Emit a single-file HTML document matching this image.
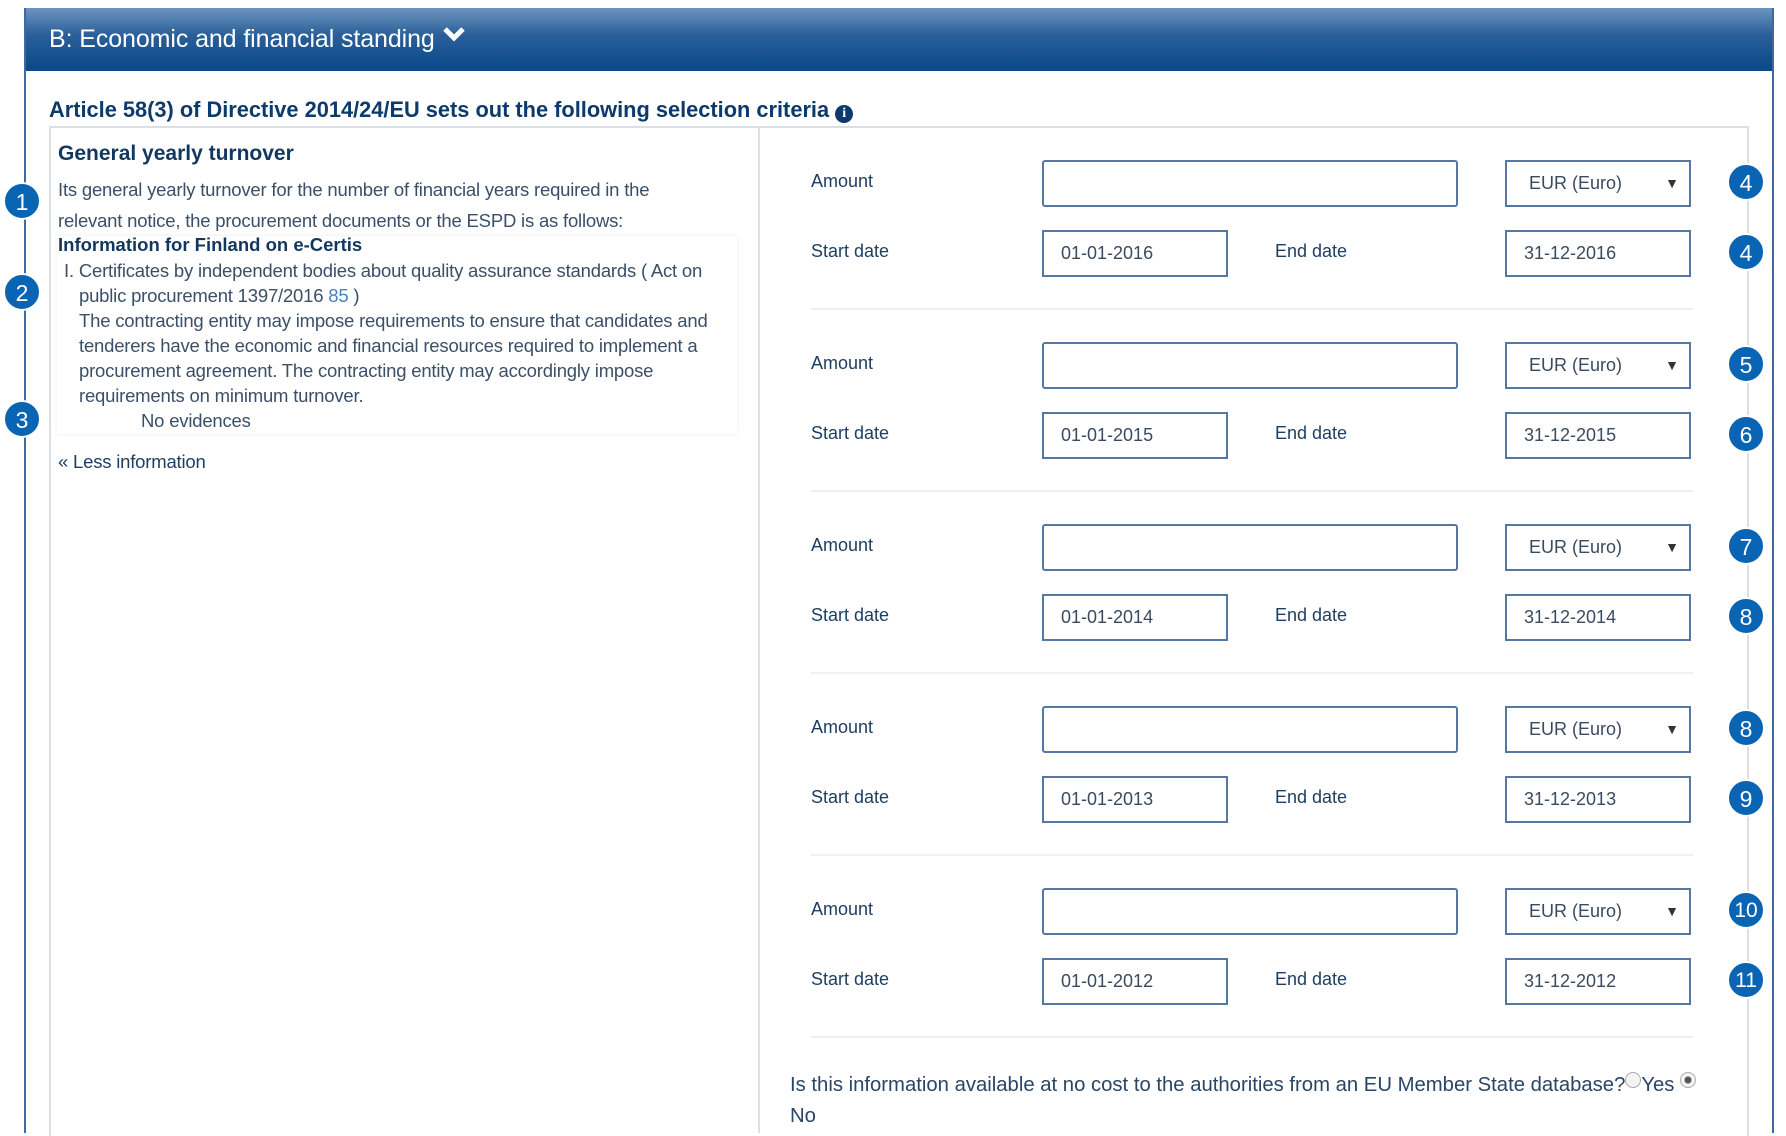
<!DOCTYPE html>
<html><head><meta charset="utf-8"><style>
*{box-sizing:border-box;margin:0;padding:0}
body{width:1786px;height:1133px;background:#fff;position:relative;overflow:hidden;font-family:"Liberation Sans",Arial,sans-serif;color:#2a3f5a}
.a{position:absolute}
.hdr{left:25px;top:8px;width:1749px;height:63px;background:linear-gradient(#6d94bd,#2a5f99 45%,#0b4a8a);border-bottom:3px solid #0a4a8c}
.hdr span{position:absolute;left:24px;top:17px;color:#fff;font-size:25px;letter-spacing:-0.1px}
.vl{width:2px;background:#3d6aa3}
.badge{width:38px;height:38px;border-radius:50%;background:#0a64b4;color:#fff;font-size:23px;text-align:center;line-height:36px;border:2px solid #fff}
.lbl{font-size:18px;color:#1e3f63}
.in{border:2px solid #5577a3;background:#fff;font-size:18px;color:#3a4a5f;padding-left:17px;line-height:42px}
.sep{height:2px;background:#eef0f2;left:811px;width:882px}
.txt{font-size:18.5px;color:#3b4f68;line-height:25px;letter-spacing:-0.2px}
</style></head><body>
<div class="a hdr"><span>B: Economic and financial standing <svg width="24" height="18" viewBox="0 0 24 18" style="vertical-align:4px"><path d="M3 4 L12 13 L21 4" fill="none" stroke="#fff" stroke-width="5"/></svg></span></div>
<div class="a vl" style="left:24px;top:8px;height:1125px"></div>
<div class="a" style="left:1772px;top:8px;width:2px;height:1125px;background:#3d6aa3"></div>
<div class="a" style="left:49px;top:97px;font-size:21.8px;font-weight:bold;color:#0d3a6c">Article 58(3) of Directive 2014/24/EU sets out the following selection criteria <span style="display:inline-block;width:18px;height:18px;border-radius:50%;background:#0d3a6c;color:#fff;font-size:14px;text-align:center;line-height:18px;font-family:'Liberation Serif',serif">i</span></div>
<div class="a" style="left:49px;top:126px;width:1700px;height:1010px;border:2px solid #dcdfe3;border-bottom:none"></div>
<div class="a" style="left:758px;top:128px;width:2px;height:1005px;background:#dcdfe3"></div>
<div class="a" style="left:58px;top:142px;font-size:21px;font-weight:bold;color:#12375f">General yearly turnover</div>
<div class="a txt" style="left:58px;top:174px;line-height:31px;width:640px">Its general yearly turnover for the number of financial years required in the relevant notice, the procurement documents or the ESPD is as follows:</div>
<div class="a" style="left:57px;top:236px;width:680px;height:198px;box-shadow:0 0 4px rgba(0,0,0,.08)"></div>
<div class="a" style="left:58px;top:234px;font-size:18.5px;font-weight:bold;color:#12375f">Information for Finland on e-Certis</div>
<div class="a txt" style="left:64px;top:258px;width:700px">I. Certificates by independent bodies about quality assurance standards ( Act on</div>
<div class="a txt" style="left:79px;top:283px;width:665px">public procurement 1397/2016 <span style="color:#4a7fc0">85</span> )<br>The contracting entity may impose requirements to ensure that candidates and tenderers have the economic and financial resources required to implement a procurement agreement. The contracting entity may accordingly impose requirements on minimum turnover.<br><span style="padding-left:62px">No evidences</span></div>
<div class="a txt" style="left:58px;top:449px;color:#1e3f63">« Less information</div>
<div class="a badge" style="left:3px;top:182px">1</div>
<div class="a badge" style="left:3px;top:273px">2</div>
<div class="a badge" style="left:3px;top:400px">3</div>

<div id="rows"></div>
<script>
var ys=[160,342,524,706,888],b=[["4","4"],["5","6"],["7","8"],["8","9"],["10","11"]],yr=[2016,2015,2014,2013,2012],h="";
for(var i=0;i<5;i++){var y=ys[i];
h+='<div class="a lbl" style="left:811px;top:'+(y+11)+'px">Amount</div>';
h+='<div class="a in" style="left:1042px;top:'+y+'px;width:416px;height:47px;border-radius:3px"></div>';
h+='<div class="a in" style="left:1505px;top:'+y+'px;width:186px;height:47px;padding-left:22px">EUR (Euro)<span style="position:absolute;right:10px;font-size:14px;color:#333">&#9660;</span></div>';
h+='<div class="a badge" style="left:1727px;top:'+(y+3)+'px;'+(b[i][0].length>1?'font-size:21px':'')+'">'+b[i][0]+'</div>';
h+='<div class="a lbl" style="left:811px;top:'+(y+81)+'px">Start date</div>';
h+='<div class="a in" style="left:1042px;top:'+(y+70)+'px;width:186px;height:47px">01-01-'+yr[i]+'</div>';
h+='<div class="a lbl" style="left:1275px;top:'+(y+81)+'px">End date</div>';
h+='<div class="a in" style="left:1505px;top:'+(y+70)+'px;width:186px;height:47px">31-12-'+yr[i]+'</div>';
h+='<div class="a badge" style="left:1727px;top:'+(y+73)+'px;'+(b[i][1].length>1?'font-size:21px':'')+'">'+b[i][1]+'</div>';
h+='<div class="a sep" style="top:'+(y+148)+'px"></div>';}
document.getElementById('rows').innerHTML=h;
</script>
<div class="a" style="left:790px;top:1070px;font-size:20.3px;color:#2a4566;line-height:31px;width:960px">Is this information available at no cost to the authorities from an EU Member State database?<span style="display:inline-block;width:16px;height:16px;border:1px solid #aaa;border-radius:50%;background:#f4f4f4;vertical-align:3px"></span>Yes <span style="display:inline-block;width:16px;height:16px;border:1px solid #aaa;border-radius:50%;background:radial-gradient(#555 3px,#f4f4f4 4px);vertical-align:3px"></span><br>No</div>
</body></html>
